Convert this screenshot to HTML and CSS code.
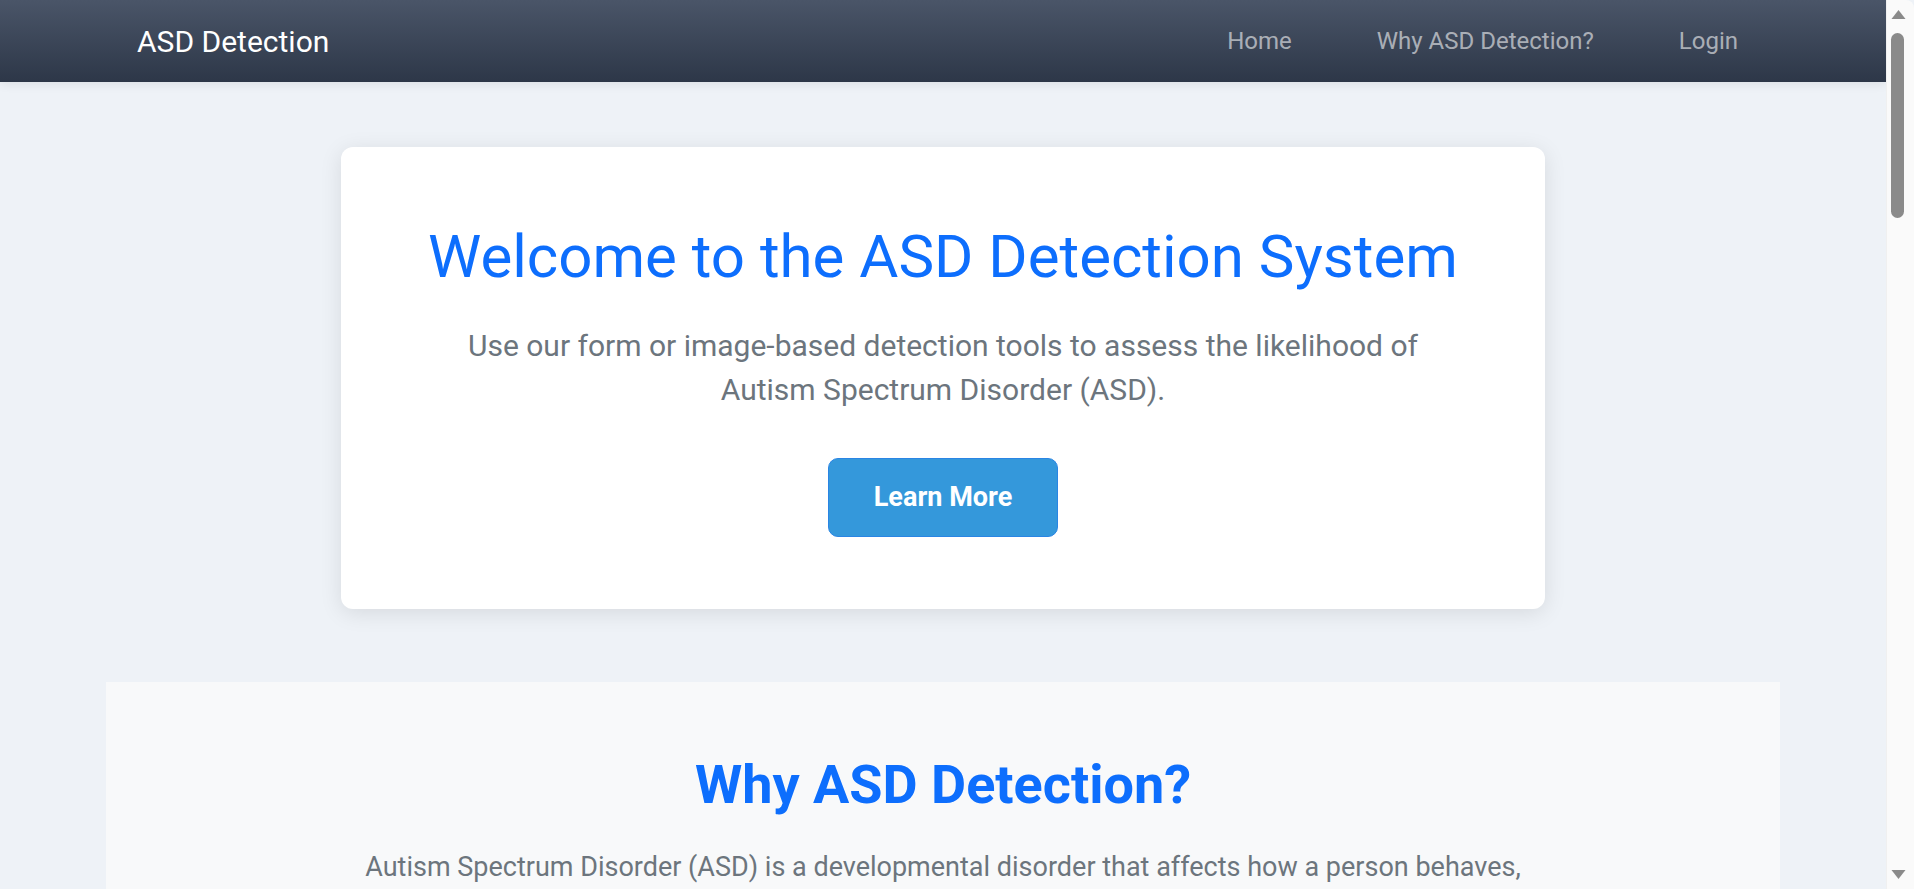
FILE: index.html
```html
<!DOCTYPE html>
<html lang="en">
<head>
<meta charset="utf-8">
<title>ASD Detection</title>
<link rel="stylesheet" href="styles.css">
</head>
<body>
<header class="navbar">
  <a class="brand" href="#">ASD Detection</a>
  <nav class="nav-links">
    <a href="#">Home</a>
    <a href="#why">Why ASD Detection?</a>
    <a href="#">Login</a>
  </nav>
</header>
<main class="page">
  <section class="hero-card">
    <h1 class="hero-title">Welcome to the ASD Detection System</h1>
    <p class="hero-text">Use our form or image-based detection tools to assess the likelihood of Autism Spectrum Disorder (ASD).</p>
    <a class="btn-learn" href="#why">Learn More</a>
  </section>
  <section class="why" id="why">
    <h2 class="why-title">Why ASD Detection?</h2>
    <p class="why-text">Autism Spectrum Disorder (ASD) is a developmental disorder that affects how a person behaves, interacts with others, communicates, and learns. Early detection allows children and families to access support and therapies sooner, which can greatly improve long-term outcomes.</p>
    <p class="why-text">Our system combines a structured screening questionnaire with image-based analysis to give an early indication of the likelihood of ASD. It is not a diagnosis, but it can help you decide whether to seek a professional evaluation.</p>
    <div class="features">
      <div class="feature"><h3>Questionnaire Screening</h3><p>Answer a short set of behavioural questions and receive an instant screening result.</p></div>
      <div class="feature"><h3>Image-Based Detection</h3><p>Upload a facial image and let our trained model estimate the likelihood of ASD traits.</p></div>
      <div class="feature"><h3>Private and Secure</h3><p>Your data is processed securely and is never shared with third parties.</p></div>
    </div>
  </section>
  <section class="why">
    <h2 class="why-title">How It Works</h2>
    <p class="why-text">Create an account and log in, choose between the form-based or the image-based detection tool, submit your answers or image, and review your result together with guidance on the next steps.</p>
  </section>
</main>
<footer class="footer">&copy; 2024 ASD Detection. All rights reserved.</footer>
<div class="scrollbar" aria-hidden="true">
  <svg class="sb-arrow" width="28" height="28" viewBox="0 0 28 28"><polygon points="4.5,19 18.5,19 11.5,10" fill="#8a8a8a"/></svg>
  <div class="sb-thumb"></div>
  <div class="sb-fill"></div>
  <svg class="sb-arrow" width="28" height="28" viewBox="0 0 28 28"><polygon points="4.5,9 18.5,9 11.5,18" fill="#8a8a8a"/></svg>
</div>
</body>
</html>
```

FILE: styles.css
```css
html {
  background: #eef2f7;
}
body {
  margin: 0 28px 0 0;
  font-family: Roboto, "Liberation Sans", Arial, sans-serif;
  background: #eef2f7;
}

.scrollbar {
  position: fixed;
  top: 0;
  right: 0;
  bottom: 0;
  width: 28px;
  display: flex;
  flex-direction: column;
  background: #fafafa;
  border-left: 1px solid #f0f0f0;
  border-top-right-radius: 8px;
  box-sizing: border-box;
}
.sb-arrow {
  display: block;
  flex: none;
}
.sb-thumb {
  flex: none;
  height: 185px;
  width: 13px;
  margin: 5px 0 0 4px;
  border-radius: 7px;
  background: #8a8a8a;
}
.sb-fill {
  flex: 1;
}

.navbar {
  height: 82px;
  box-sizing: border-box;
  display: flex;
  align-items: center;
  justify-content: space-between;
  padding: 0 148px 0 137px;
  background: linear-gradient(180deg, #4a5568 0%, #2d3748 100%);
  box-shadow: 0 2px 10px rgba(0, 0, 0, 0.08);
}
.brand {
  font-size: 30px;
  color: #ffffff;
  text-decoration: none;
}
.nav-links {
  display: flex;
  gap: 85px;
}
.nav-links a {
  font-size: 24px;
  color: rgba(255, 255, 255, 0.58);
  text-decoration: none;
}

.page {
  padding-bottom: 80px;
}

.hero-card {
  width: 1204px;
  box-sizing: border-box;
  margin: 65px auto 0;
  padding: 74px 80px 72px;
  background: #ffffff;
  border-radius: 12px;
  box-shadow: 0 4px 22px rgba(0, 0, 0, 0.1);
  text-align: center;
}
.hero-title {
  margin: 0;
  font-size: 60px;
  font-weight: 400;
  line-height: normal;
  color: #0d6efd;
}
.hero-text {
  margin: 32px 0 0;
  font-size: 30px;
  line-height: 44px;
  color: #6c757d;
}
.btn-learn {
  display: inline-block;
  margin-top: 46px;
  height: 79px;
  box-sizing: border-box;
  padding: 0 45px;
  line-height: 77px;
  background: #3498db;
  border: 1px solid #2a85e4;
  border-radius: 10px;
  color: #ffffff;
  font-size: 27px;
  font-weight: 700;
  text-decoration: none;
}

.why {
  margin: 73px 106px 0;
  padding: 71px 40px 80px;
  background: #f8f9fa;
  text-align: center;
}
.why-title {
  margin: 0;
  font-size: 54px;
  font-weight: 700;
  line-height: normal;
  color: #0d6efd;
}
.why-text {
  max-width: 1200px;
  margin: 30px auto 0;
  font-size: 27px;
  line-height: 1.6;
  color: #6c757d;
}
.features {
  display: grid;
  grid-template-columns: repeat(3, 1fr);
  gap: 32px;
  margin-top: 60px;
}
.feature {
  background: #ffffff;
  border-radius: 12px;
  padding: 40px 32px;
  box-shadow: 0 4px 16px rgba(0, 0, 0, 0.06);
}
.feature h3 {
  margin: 0 0 16px;
  font-size: 30px;
  color: #2d3748;
}
.feature p {
  margin: 0;
  font-size: 22px;
  line-height: 1.6;
  color: #6c757d;
}
.footer {
  padding: 40px 0;
  text-align: center;
  font-size: 20px;
  color: #ffffff;
  background: #2d3748;
}
```
